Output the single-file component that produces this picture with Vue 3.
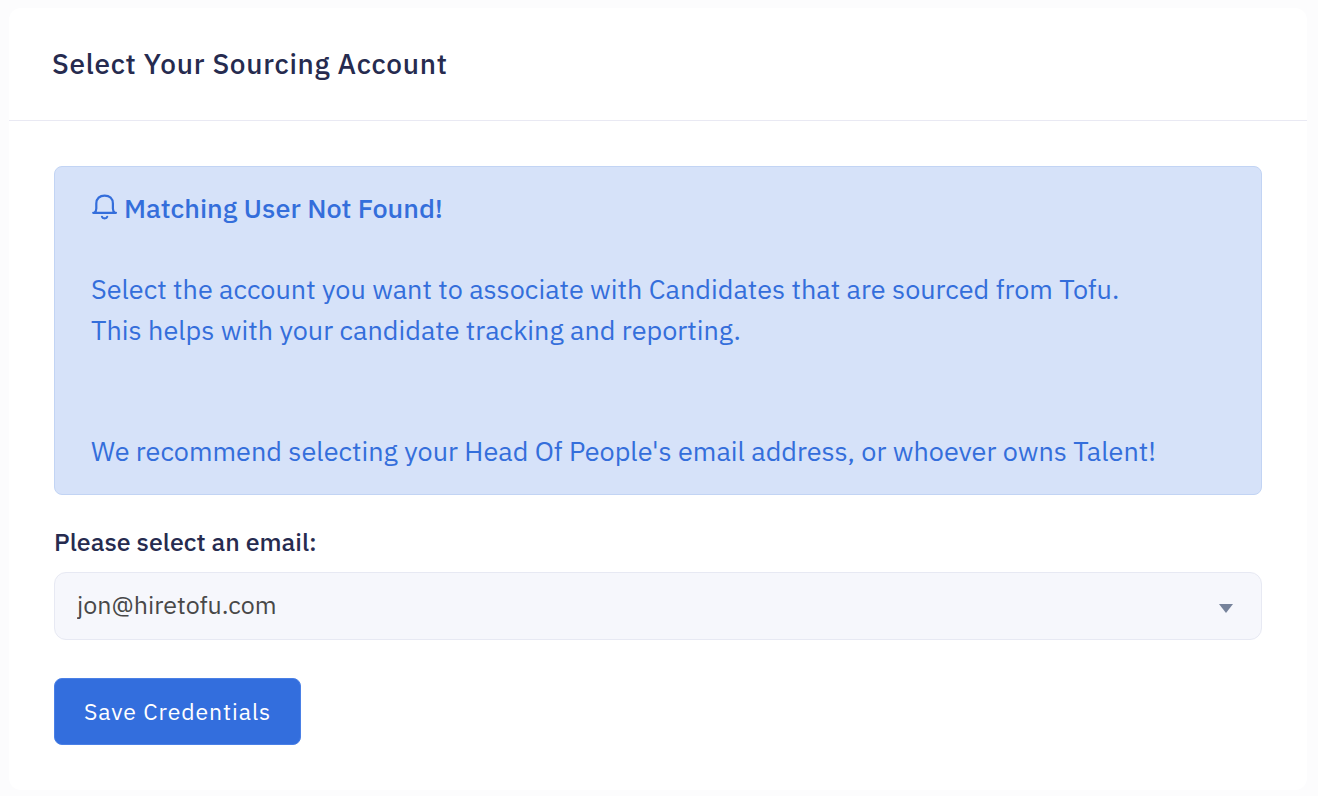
<script setup>
import { ref } from 'vue'

const email = ref('jon@hiretofu.com')
const emails = ['jon@hiretofu.com']
</script>

<template>
  <main class="page">
    <section class="card">
      <header class="card-header">
        <h1>Select Your Sourcing Account</h1>
      </header>
      <form class="card-body" @submit.prevent>
        <div class="alert" role="alert">
          <h2>
            <svg class="bell" viewBox="0 0 28 28" aria-hidden="true">
              <path d="M2.2 18.8H25M3.4 18.6C5 17.6 5.3 16.4 5.3 14.5V9.6C5.3 4.4 8.8 1.6 13.6 1.6S21.9 4.4 21.9 9.6V14.5C21.9 16.4 22.2 17.6 23.8 18.6M11 22.8C11.6 25 15.6 25 16.2 22.8" />
            </svg>
            <span>Matching User Not Found!</span>
          </h2>
          <p>Select the account you want to associate with Candidates that are sourced from Tofu.<br />This helps with your candidate tracking and reporting.</p>
          <p class="advice">We recommend selecting your Head Of People's email address, or whoever owns Talent!</p>
        </div>
        <label for="email">Please select an email:</label>
        <div class="select-wrap">
          <select id="email" v-model="email">
            <option v-for="item in emails" :key="item" :value="item">{{ item }}</option>
          </select>
          <svg class="caret" viewBox="0 0 14 9" aria-hidden="true"><path d="M0 0H14L7 9Z" /></svg>
        </div>
        <button type="submit">Save Credentials</button>
      </form>
    </section>
  </main>
</template>

<style>
body {
  background: #fcfcfd;
}
</style>

<style scoped>
* {
  box-sizing: border-box;
}
.page {
  padding: 8px 11px 6px 9px;
  font-family: "IBM Plex Sans", Roboto, "Liberation Sans", sans-serif;
  color: #262b4f;
}
.card {
  background: #fff;
  border-radius: 12px;
}
.card-header {
  padding: 36px 43px;
  border-bottom: 1px solid #e9e9f3;
}
h1 {
  margin: 0;
  font-size: 28px;
  line-height: 40px;
  font-weight: 500;
  letter-spacing: 0.025em;
}
.card-body {
  padding: 45px;
}
.alert {
  padding: 20px 36px 23px;
  border: 1px solid #c2d4f4;
  border-radius: 8px;
  background: #d6e2f9;
  color: #346edb;
  font-size: 27px;
  line-height: 41px;
}
h2 {
  display: flex;
  align-items: center;
  gap: 5px;
  margin: 0 0 40px;
  font-size: 27px;
  line-height: 41px;
  font-weight: 500;
}
.bell {
  width: 28px;
  height: 28px;
  fill: none;
  stroke: currentColor;
  stroke-width: 2.2;
  stroke-linecap: round;
}
p {
  margin: 0;
}
.advice {
  margin-top: 80px;
}
label {
  display: block;
  margin: 26px 0 10px;
  font-size: 25px;
  line-height: 41px;
  font-weight: 500;
}
.select-wrap {
  position: relative;
}
select {
  display: block;
  width: 100%;
  height: 68px;
  padding: 0 60px 2px 22px;
  appearance: none;
  border: 1px solid #e7e9f3;
  border-radius: 12px;
  background: #f6f7fc;
  color: #484848;
  font: 25px/40px "IBM Plex Sans", Roboto, sans-serif;
}
.caret {
  position: absolute;
  top: 32px;
  right: 29px;
  width: 14px;
  height: 9px;
  fill: #76839b;
}
button {
  display: block;
  margin-top: 38px;
  height: 67px;
  padding: 0 29px 2px;
  border: 1px solid #4a80e6;
  border-radius: 8px;
  background: #336edd;
  color: #fff;
  font: 23px/40px "IBM Plex Sans", Roboto, sans-serif;
  letter-spacing: 0.04em;
}
</style>
